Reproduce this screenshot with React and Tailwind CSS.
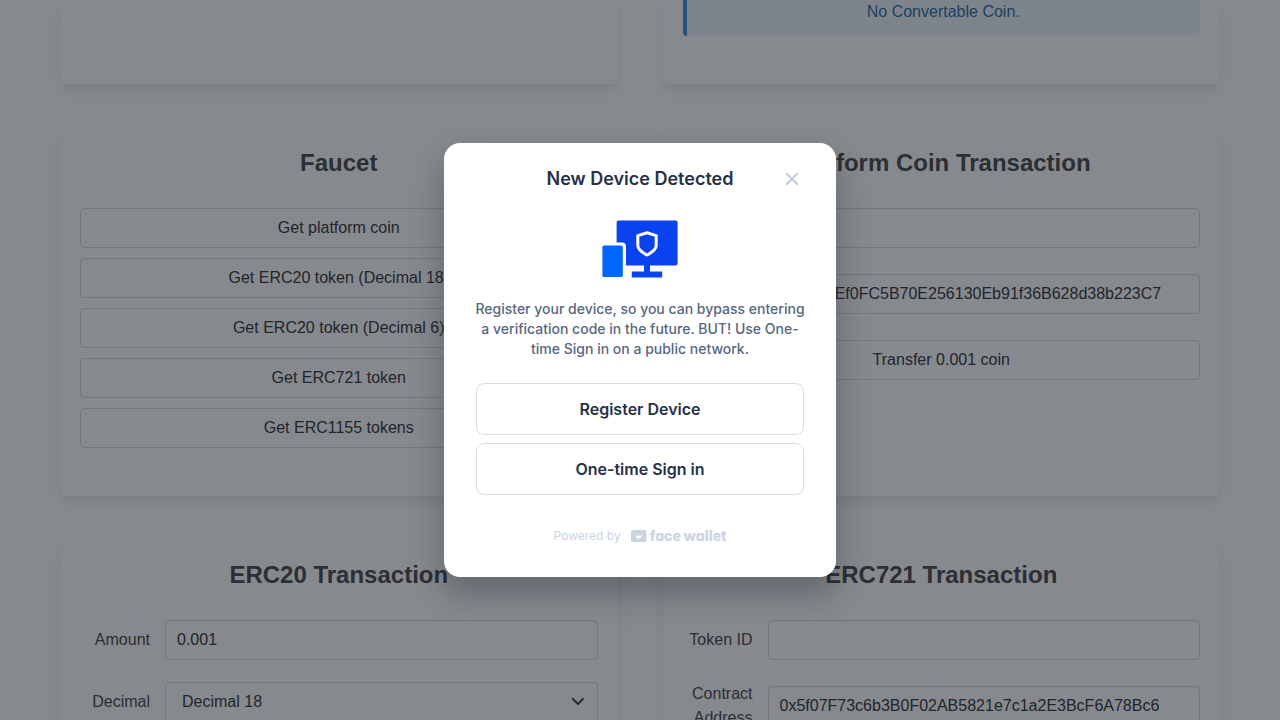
import { useId } from "react";

const control =
  "h-10 w-full rounded border border-[#dbdbdb] bg-white text-base text-[#363636]";
const inset = "shadow-[inset_0_1px_2px_rgba(10,10,10,0.05)]";
const panel =
  "bg-white px-5 pb-12 shadow-[0_8px_16px_-2px_rgba(10,10,10,0.1),0_0_0_1px_rgba(10,10,10,0.02)]";

function Card({ title, children }) {
  return (
    <section className={`${panel} rounded-md pt-5`}>
      <h2 className="mb-8 text-center text-2xl leading-[27px] font-bold text-[#4a4a4a]">
        {title}
      </h2>
      {children}
    </section>
  );
}

function Field({ label, value, options }) {
  const id = useId();
  return (
    <div className="flex items-center gap-[15px]">
      <label htmlFor={id} className="w-[70px] shrink-0 text-right">
        {label}
      </label>
      {options ? (
        <div className="relative flex-1">
          <select id={id} className={`${control} appearance-none px-4`}>
            {options.map((option) => (
              <option key={option}>{option}</option>
            ))}
          </select>
          <svg
            className="pointer-events-none absolute top-3 right-3 size-4"
            viewBox="0 0 16 16"
            fill="none"
            stroke="#4a4a4a"
            strokeWidth="2.2"
            strokeLinecap="round"
            strokeLinejoin="round"
          >
            <path d="M3 5l5 5 5-5" />
          </svg>
        </div>
      ) : (
        <input id={id} defaultValue={value} className={`${control} ${inset} min-w-0 flex-1 px-[11px]`} />
      )}
    </div>
  );
}

const faucets = [
  "Get platform coin",
  "Get ERC20 token (Decimal 18)",
  "Get ERC20 token (Decimal 6)",
  "Get ERC721 token",
  "Get ERC1155 tokens",
];

function Dashboard() {
  return (
    <main className="px-[60px] text-base leading-6 text-[#4a4a4a]">
      <div className="grid grid-cols-2 gap-[45px]">
        <section className={`${panel} rounded-b-md`} />
        <section className={`${panel} rounded-b-md`}>
          <p className="rounded-b border-l-4 border-[#3e8ed0] bg-[#eff5fb] pb-3 text-center text-[#296fa8]">
            No Convertable Coin.
          </p>
        </section>
        <Card title="Faucet">
          <div className="flex flex-col gap-2.5">
            {faucets.map((name) => (
              <button key={name} type="button" className={control}>
                {name}
              </button>
            ))}
          </div>
        </Card>
        <Card title="Platform Coin Transaction">
          <div className="flex flex-col gap-[22px]">
            <Field label="Amount" value="" />
            <Field label="Receiver Address" value="0xb1C4Ef0FC5B70E256130Eb91f36B628d38b223C7" />
            <button type="button" className={control}>
              Transfer 0.001 coin
            </button>
          </div>
        </Card>
        <Card title="ERC20 Transaction">
          <div className="flex flex-col gap-[22px]">
            <Field label="Amount" value="0.001" />
            <Field label="Decimal" options={["Decimal 18", "Decimal 6"]} />
          </div>
        </Card>
        <Card title="ERC721 Transaction">
          <div className="flex flex-col gap-[22px]">
            <Field label="Token ID" value="" />
            <Field label="Contract Address" value="0x5f07F73c6b3B0F02AB5821e7c1a2E3BcF6A78Bc6" />
          </div>
        </Card>
      </div>
    </main>
  );
}

function DeviceIcon() {
  return (
    <svg className="mx-auto h-[58px] w-[76px]" viewBox="0 0 76 58" aria-hidden="true">
      <path
        fill="#0A42F0"
        d="M16.8.5H73.600a2 2 0 0 1 2 2V43.500a2 2 0 0 1-2 2H48V51.500H60.200V57.500H29.800V51.500H42V45.500H24V26.500a4 4 0 0 0-4-4H14.600V2.500a2 2 0 0 1 2-2Z"
      />
      <rect x=".4" y="25.500" width="20.400" height="31.600" rx="1.600" fill="#0066FF" />
      <path
        d="M45 12.700l9.200 2.900v9.900c0 4-3.500 6.600-9.200 9.500-5.700-2.900-9.200-5.500-9.200-9.500v-9.900Z"
        fill="none"
        stroke="#fff"
        strokeWidth="3"
        strokeLinejoin="round"
      />
    </svg>
  );
}

function DeviceDialog() {
  const action =
    "h-[52px] w-full rounded-lg border border-[#d9dee6] text-base font-semibold text-[#253147]";
  return (
    <div
      role="dialog"
      aria-modal="true"
      aria-labelledby="dialog-title"
      className="w-[392px] rounded-2xl bg-white px-8 pt-6 pb-[30px] font-['Inter',sans-serif] shadow-[0_16px_32px_rgba(22,28,45,0.32)]"
    >
      <header className="grid grid-cols-[24px_1fr_24px] items-center">
        <h1 id="dialog-title" className="col-start-2 text-center text-lg leading-6 font-semibold text-[#253147]">
          New Device Detected
        </h1>
        <button type="button" aria-label="Close" className="flex size-6 items-center justify-center">
          <svg viewBox="0 0 24 24" className="size-6" fill="none" stroke="#C4CEDA" strokeWidth="2.2">
            <path d="M6.200 6.200l11.600 11.600M17.800 6.200L6.200 17.800" />
          </svg>
        </button>
      </header>
      <div className="pt-[29px] pb-[21px]">
        <DeviceIcon />
      </div>
      <p className="-mx-1 text-center text-sm font-medium text-[#56677f]">
        Register your device, so you can bypass entering a verification code in the future. BUT! Use
        One-time Sign in on a public network.
      </p>
      <div className="mt-6 flex flex-col gap-2">
        <button type="button" className={action}>
          Register Device
        </button>
        <button type="button" className={action}>
          One-time Sign in
        </button>
      </div>
      <footer className="mt-[30px] flex h-[22px] items-center justify-center gap-2.5 text-[#cbd5e1]">
        <span className="text-xs">Powered by</span>
        <span className="flex items-center gap-[3px]">
          <svg viewBox="0 0 16 12" className="h-3 w-4" aria-hidden="true">
            <rect width="15.500" height="12" rx="1.800" fill="currentColor" />
            <path d="M4.700 5c1 1 5.100 1 6.100 0 .6 5-6.700 5-6.100 0Z" fill="#fff" />
          </svg>
          <span className="text-sm leading-4 font-extrabold [font-feature-settings:'cv11']">face wallet</span>
        </span>
      </footer>
    </div>
  );
}

export default function App() {
  return (
    <div className="relative h-screen overflow-hidden bg-white font-['Liberation_Sans',Arial,sans-serif]">
      <Dashboard />
      <div className="absolute inset-0 flex items-center justify-center bg-[rgba(13,19,27,0.5)]">
        <DeviceDialog />
      </div>
    </div>
  );
}
